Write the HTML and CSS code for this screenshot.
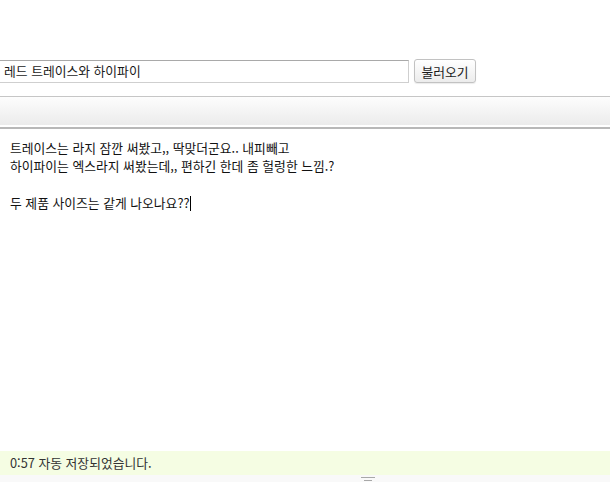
FILE: index.html
```html
<!DOCTYPE html>
<html lang="ko">
<head>
<meta charset="utf-8">
<link rel="stylesheet" href="styles.css">
</head>
<body>
<div class="page">
  <div class="title-row">
    <div class="title-input">레드 트레이스와 하이파이</div>
    <button class="load-btn">불러오기</button>
  </div>
  <div class="toolbar"></div>
  <div class="editor">
    <p>트레이스는 라지 잠깐 써봤고,, 딱맞더군요.. 내피빼고</p>
    <p>하이파이는 엑스라지 써봤는데,, 편하긴 한데 좀 헐렁한 느낌.?</p>
    <p>&nbsp;</p>
    <p>두 제품 사이즈는 같게 나오나요??<span class="caret"></span></p>
  </div>
  <div class="status">0:57 자동 저장되었습니다.</div>
  <div class="resize">
    <svg class="grip" width="14" height="5" viewBox="0 0 14 5"><rect x="0" y="0" width="14" height="1" fill="#a8a8a8"/><rect x="3" y="3" width="8" height="1" fill="#a8a8a8"/></svg>
  </div>
</div>
</body>
</html>
```

FILE: styles.css
```css
* { box-sizing: border-box; }
html, body { margin: 0; padding: 0; background: #fff; }
body {
  font-family: "Noto Sans CJK KR", "Noto Sans", sans-serif;
  font-size: 12.8px;
  color: #1a1a1a;
}
.page {
  width: 610px;
  height: 482px;
  display: flex;
  flex-direction: column;
  overflow: hidden;
}
.title-row {
  margin-top: 59px;
  height: 24px;
  display: flex;
  align-items: flex-start;
  gap: 5px;
}
.title-input {
  margin-top: 1px;
  width: 409px;
  height: 23px;
  border: 1px solid #cfcfcf;
  border-top-color: #a9a9a9;
  border-left: none;
  padding: 0 0 0 4px;
  line-height: 20px;
  font-size: 12.8px;
  color: #1a1a1a;
  background: #fff;
}
.load-btn {
  width: 62px;
  height: 24px;
  border: 1px solid #c2c2c2;
  border-radius: 3px;
  background: linear-gradient(#ffffff, #ececec);
  font-family: "Noto Sans CJK KR", "Noto Sans", sans-serif;
  font-size: 12.8px;
  color: #1a1a1a;
  padding: 0;
  line-height: 21px;
  box-shadow: 0 1px 1px rgba(0,0,0,0.08);
}
.toolbar {
  margin-top: 13px;
  height: 33px;
  border-top: 1px solid #c6c6c6;
  border-bottom: 2px solid #b8b8b8;
  background: linear-gradient(#fdfdfd, #ebebeb 95%, #ffffff 95%);
  flex: none;
}
.editor {
  flex: 1;
  padding: 10px 10px 0 10px;
  line-height: 18.4px;
  font-size: 12.8px;
  color: #111;
}
.editor p { margin: 0; white-space: nowrap; }
.caret {
  display: inline-block;
  width: 1px;
  height: 15px;
  background: #000;
  vertical-align: -3px;
}
.status {
  height: 24px;
  flex: none;
  background: #f5fde3;
  padding-left: 10px;
  line-height: 24px;
  font-size: 12.8px;
  color: #333;
}
.resize {
  height: 7px;
  flex: none;
  background: #f9f9f9;
  display: flex;
  justify-content: center;
  padding-left: 126px;
  align-items: flex-end;
}
.grip { display: block; }
```
